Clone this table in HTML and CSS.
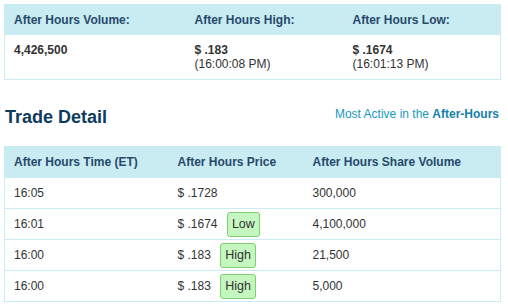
FILE: index.html
```html
<!DOCTYPE html>
<html>
<head>
<meta charset="utf-8">
<link rel="stylesheet" href="styles.css">
</head>
<body>
<div class="page">
  <table class="grid summary">
    <colgroup><col class="s1"><col class="s2"><col class="s3"></colgroup>
    <thead>
      <tr><th>After Hours Volume:</th><th>After Hours High:</th><th>After Hours Low:</th></tr>
    </thead>
    <tbody>
      <tr>
        <td><b>4,426,500</b></td>
        <td><b>$ .183</b><br>(16:00:08 PM)</td>
        <td><b>$ .1674</b><br>(16:01:13 PM)</td>
      </tr>
    </tbody>
  </table>

  <div class="titlebar">
    <h2 class="title">Trade Detail</h2>
    <a class="link">Most Active in the <b>After-Hours</b></a>
  </div>

  <table class="grid trades">
    <colgroup><col class="t1"><col class="t2"><col class="t3"></colgroup>
    <thead>
      <tr><th>After Hours Time (ET)</th><th>After Hours Price</th><th>After Hours Share Volume</th></tr>
    </thead>
    <tbody>
      <tr><td>16:05</td><td>$ .1728</td><td>300,000</td></tr>
      <tr><td>16:01</td><td>$ .1674 <span class="badge">Low</span></td><td>4,100,000</td></tr>
      <tr><td>16:00</td><td>$ .183 <span class="badge">High</span></td><td>21,500</td></tr>
      <tr><td>16:00</td><td>$ .183 <span class="badge">High</span></td><td>5,000</td></tr>
    </tbody>
  </table>
</div>
</body>
</html>
```

FILE: styles.css
```css
html, body {
  margin: 0;
  padding: 0;
  background: #ffffff;
}
body {
  font-family: "Liberation Sans", Arial, sans-serif;
  font-size: 12px;
  color: #333333;
}
.page {
  padding: 4px 8px 0 4px;
  width: 496px;
}
.grid {
  width: 496px;
  border-collapse: collapse;
  table-layout: fixed;
  border: 1px solid #c8ecf2;
}
.grid th {
  background: #c8ecf2;
  color: #27496b;
  font-weight: bold;
  text-align: left;
  padding: 0 9px;
  height: 30px;
  font-size: 12px;
}
.summary .s1 { width: 181px; }
.summary .s2 { width: 158px; }
.summary .s3 { width: 157px; }
.summary td {
  vertical-align: top;
  padding: 8px 9px 7px;
  height: 29px;
  line-height: 14px;
  color: #333;
}
.summary td b { color: #333; }
.titlebar {
  display: flex;
  justify-content: space-between;
  align-items: flex-end;
  padding: 27px 0 18px 1px;
}
.title {
  margin: 0;
  font-size: 18px;
  line-height: 21px;
  color: #0d3b5e;
  font-weight: bold;
}
.link {
  color: #1998bf;
  font-size: 12px;
  line-height: 14px;
  margin-bottom: 7px;
  margin-right: 1px;
}
.link b { color: #1580a8; }
.trades .t1 { width: 164px; }
.trades .t2 { width: 135px; }
.trades .t3 { width: 197px; }
.trades td {
  padding: 0 9px;
  height: 30px;
  border-top: 1px solid #c8ecf2;
  white-space: nowrap;
}
.badge {
  display: inline-block;
  vertical-align: middle;
  margin-left: 6px;
  padding: 5px 4px;
  line-height: 13px;
  font-size: 12.5px;
  background: #c6f6c0;
  border: 1px solid #7fcf72;
  border-radius: 3px;
  color: #333;
}
```
